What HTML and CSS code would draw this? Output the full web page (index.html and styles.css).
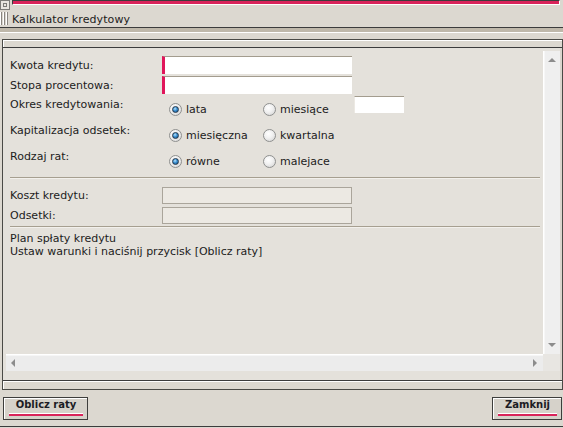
FILE: index.html
```html
<!DOCTYPE html>
<html lang="pl">
<head>
<meta charset="utf-8">
<title>Kalkulator kredytowy</title>
<link rel="stylesheet" href="styles.css">
</head>
<body>
<div class="titlebar">
  <div class="tb-left">
    <div class="tb-icon"></div>
    <div class="tb-grip"></div>
  </div>
  <div class="tb-main">
    <div class="tb-accent"></div>
    <div class="tb-title">Kalkulator kredytowy</div>
  </div>
</div>
<div class="sep"></div>
<div class="panel">
  <div class="panel-head"></div>
  <div class="panel-body">
    <div class="scroll">
      <div class="viewport">
        <div class="row-input">
          <span class="label">Kwota kredytu:</span>
          <div class="field required"></div>
        </div>
        <div class="row-input">
          <span class="label">Stopa procentowa:</span>
          <div class="field required"></div>
        </div>
        <div class="radio-rows">
          <div class="row-radio">
            <span class="label">Okres kredytowania:</span>
            <div class="options">
              <div class="opt opt1"><span class="radio checked"></span>lata</div>
              <div class="opt opt2"><span class="radio"></span>miesiące</div>
              <div class="field small"></div>
            </div>
          </div>
          <div class="row-radio">
            <span class="label">Kapitalizacja odsetek:</span>
            <div class="options">
              <div class="opt opt1"><span class="radio checked"></span>miesięczna</div>
              <div class="opt opt2"><span class="radio"></span>kwartalna</div>
            </div>
          </div>
          <div class="row-radio">
            <span class="label">Rodzaj rat:</span>
            <div class="options">
              <div class="opt opt1"><span class="radio checked"></span>równe</div>
              <div class="opt opt2"><span class="radio"></span>malejace</div>
            </div>
          </div>
        </div>
        <div class="rule"></div>
        <div class="results">
          <div class="row-input">
            <span class="label">Koszt kredytu:</span>
            <div class="field readonly"></div>
          </div>
          <div class="row-input">
            <span class="label">Odsetki:</span>
            <div class="field readonly"></div>
          </div>
        </div>
        <div class="rule rule2"></div>
        <div class="plan">
          <div>Plan spłaty kredytu</div>
          <div>Ustaw warunki i naciśnij przycisk [Oblicz raty]</div>
        </div>
      </div>
      <div class="vscroll">
        <span class="arrow up"></span>
        <span class="arrow down"></span>
      </div>
      <div class="hscroll">
        <span class="arrow left"></span>
        <span class="arrow right"></span>
      </div>
      <div class="corner"></div>
    </div>
  </div>
  <div class="panel-foot"></div>
</div>
<div class="buttons">
  <button class="btn btn-calc"><span class="btn-text">Oblicz raty</span><span class="btn-line"></span></button>
  <button class="btn btn-close"><span class="btn-text">Zamknij</span><span class="btn-line"></span></button>
</div>
</body>
</html>
```

FILE: styles.css
```css
html, body {
  margin: 0;
  padding: 0;
}
body {
  width: 563px;
  height: 428px;
  overflow: hidden;
  background: #dcd8d0;
  font-family: "DejaVu Sans", Verdana, sans-serif;
  font-size: 11px;
  color: #1c1c1c;
}

/* title bar */
.titlebar {
  display: flex;
  height: 27px;
}
.tb-left {
  width: 12px;
  display: flex;
  flex-direction: column;
}
.tb-icon {
  width: 10px;
  height: 10px;
  box-sizing: border-box;
  border: 1px solid #7c7c78;
  background: #e8e6e0;
  display: flex;
  align-items: center;
  justify-content: center;
}
.tb-icon::after {
  content: "";
  width: 2px;
  height: 2px;
  border: 1px solid #7c7c78;
}
.tb-grip {
  margin-top: 2px;
  margin-bottom: 2px;
  width: 9px;
  flex: 1;
  background: repeating-linear-gradient(90deg, #ffffff 0 1px, #8a8680 1px 2px, #dcd8d0 2px 3px);
}
.tb-main {
  flex: 1;
  display: flex;
  flex-direction: column;
}
.tb-accent {
  height: 3px;
  margin-right: 3px;
  border-top: 1px solid #3c3c3c;
  border-left: 1px solid #3c3c3c;
  border-bottom: 1px solid #ffffff;
  border-right: 1px solid #ffffff;
  background: #d9235a;
}
.tb-title {
  margin-top: 8px;
  line-height: 13px;
  letter-spacing: 0.1px;
}

.sep {
  height: 4px;
  border-top: 1px solid #3c3c3c;
  border-bottom: 1px solid #ffffff;
  background: #bfb8aa;
}

/* panel */
.panel {
  margin: 6px 0 0 2px;
  width: 561px;
  height: 351px;
  box-sizing: border-box;
  border: 1px solid #4a4a46;
  display: flex;
  flex-direction: column;
}
.panel-head {
  height: 7px;
  flex: none;
  background: #dcd8d0;
  box-shadow: inset 1px 1px 0 #ffffff;
  border-bottom: 1px solid #3c3c3c;
}
.panel-body {
  flex: 1;
  background: #e4e1db;
  padding: 3px 2px 9px 3px;
  box-shadow: inset -2px 0 0 #dad6ce;
}
.panel-foot {
  height: 8px;
  flex: none;
  border-top: 1px solid #3c3c3c;
  background: #dcd8d0;
  box-shadow: inset 1px 1px 0 #ffffff;
}

.scroll {
  height: 100%;
  display: grid;
  grid-template-columns: 1fr 17px;
  grid-template-rows: 1fr 17px;
}
.viewport {
  padding: 4px 0 0 4px;
  overflow: hidden;
}
.vscroll {
  position: relative;
  background: #efefef;
  box-shadow: inset 1px 0 0 #ffffff, inset 2px 0 0 #f7f7f7;
}
.hscroll {
  position: relative;
  background: #ececec;
  box-shadow: inset 0 1px 0 #ffffff, inset 0 2px 0 #f6f6f6;
}
.corner {
  background: #e8e6e2;
}
.arrow {
  position: absolute;
  width: 0;
  height: 0;
}
.arrow.up {
  top: 7px;
  left: 5px;
  border-left: 4px solid transparent;
  border-right: 4px solid transparent;
  border-bottom: 4px solid #8c8c8c;
}
.arrow.down {
  bottom: 7px;
  left: 5px;
  border-left: 4px solid transparent;
  border-right: 4px solid transparent;
  border-top: 4px solid #8c8c8c;
}
.arrow.left {
  top: 5px;
  left: 5px;
  border-top: 4px solid transparent;
  border-bottom: 4px solid transparent;
  border-right: 4px solid #8c8c8c;
}
.arrow.right {
  top: 5px;
  right: 6px;
  border-top: 4px solid transparent;
  border-bottom: 4px solid transparent;
  border-left: 4px solid #8c8c8c;
}

/* form */
.label {
  width: 152px;
  flex: none;
}
.row-input {
  display: flex;
  align-items: center;
  height: 20px;
}
.field {
  box-sizing: border-box;
  background: #ffffff;
}
.field.required {
  width: 190px;
  height: 18px;
  border-left: 3px solid #e0165a;
  border-top: 1px solid #a39c8e;
}
.field.small {
  width: 50px;
  height: 17px;
  border-top: 1px solid #a39c8e;
  border-left: 1px solid #ece9e3;
  align-self: flex-start;
}
.field.readonly {
  width: 190px;
  height: 17px;
  background: #ece9e3;
  border: 1px solid #aaa59b;
}

.radio-rows {
  margin-top: 1px;
}
.row-radio {
  display: flex;
  height: 26px;
}
.row-radio .label {
  padding-top: 2px;
  line-height: 13px;
}
.options {
  display: flex;
  padding-left: 7px;
}
.opt {
  display: flex;
  align-items: center;
  gap: 4px;
  height: 13px;
  margin-top: 7px;
  line-height: 13px;
}
.opt1 {
  width: 94px;
}
.opt2 {
  width: 91px;
}
.radio {
  width: 13px;
  height: 13px;
  box-sizing: border-box;
  border-radius: 50%;
  border: 1px solid #8f908f;
  background: radial-gradient(circle at 40% 35%, #ffffff 0%, #f0f0f0 45%, #cfcfcf 100%);
  display: flex;
  align-items: center;
  justify-content: center;
  flex: none;
}
.radio.checked::after {
  content: "";
  width: 7px;
  height: 7px;
  box-sizing: border-box;
  border-radius: 50%;
  border: 1px solid #24384c;
  background: radial-gradient(circle at 40% 35%, #b8e4ff 0%, #3a8fd0 45%, #0f4c86 100%);
}

.rule {
  margin-top: 3px;
  width: 530px;
  height: 0;
  border-top: 1px solid #a69f90;
  border-bottom: 1px solid #f2f0ec;
}
.results {
  margin-top: 6px;
}
.rule2 {
  margin-top: 1px;
}
.plan {
  margin-top: 4px;
  line-height: 13px;
}

/* buttons */
.buttons {
  height: 35px;
  display: flex;
  justify-content: space-between;
  align-items: flex-start;
  padding: 6px 1px 0 3px;
  box-sizing: border-box;
  border-bottom: 1px solid #3c3c3c;
  margin-top: 1px;
  height: 36px;
}
.btn {
  height: 23px;
  box-sizing: border-box;
  border: 1px solid #3e3e3c;
  background: #d6d2ca;
  box-shadow: inset 1px 1px 0 #ffffff;
  padding: 1px 4px 0 5px;
  margin: 0;
  display: flex;
  flex-direction: column;
  align-items: stretch;
  font-family: "DejaVu Sans", Verdana, sans-serif;
  font-size: 10px;
  font-weight: bold;
  color: #1c1c24;
  cursor: default;
}
.btn-calc {
  width: 85px;
}
.btn-close {
  width: 70px;
}
.btn-text {
  display: block;
  text-align: center;
  line-height: 12px;
  height: 12px;
}
.btn-line {
  display: block;
  margin-top: 2px;
  height: 2px;
  border-top: 1px solid #ffffff;
  background: #d9235a;
}
```
